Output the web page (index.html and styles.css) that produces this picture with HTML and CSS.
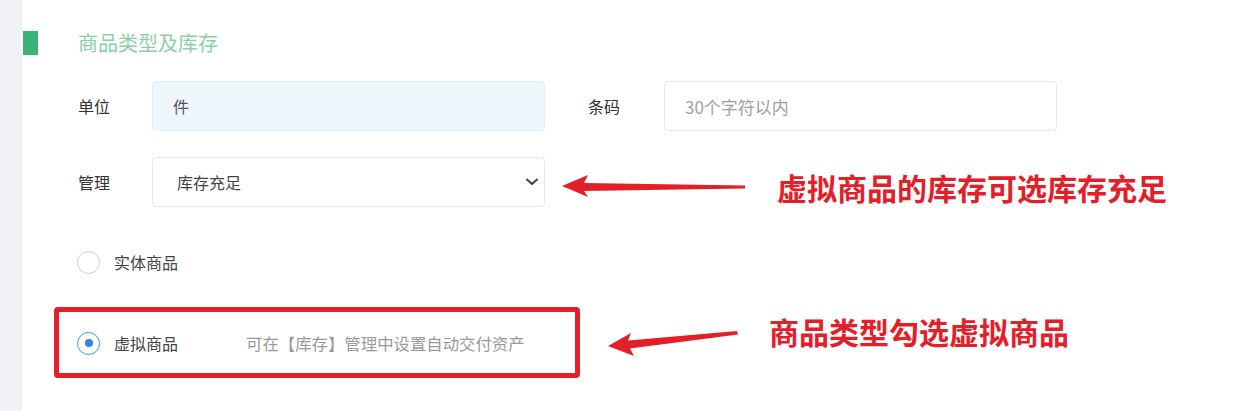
FILE: index.html
```html
<!DOCTYPE html>
<html lang="zh-CN">
<head>
<meta charset="utf-8">
<title>商品类型及库存</title>
<link rel="stylesheet" href="styles.css">
</head>
<body>
<div class="page">
  <div class="side"></div>
  <div class="main">
    <div class="sec-head">
      <span class="bar"></span>
      <span class="sec-title">商品类型及库存</span>
    </div>
    <div class="form">
      <div class="row">
        <span class="label">单位</span>
        <div class="field field-filled">件</div>
        <span class="label label-2">条码</span>
        <div class="field field-placeholder">30个字符以内</div>
      </div>
      <div class="row row-2">
        <span class="label">管理</span>
        <div class="field field-select">
          <span class="select-text">库存充足</span>
          <svg class="chevron" width="12" height="8" viewBox="0 0 12 8"><polyline points="1,1.5 6,6 11,1.5" fill="none" stroke="#444" stroke-width="2" stroke-linecap="round" stroke-linejoin="round"/></svg>
        </div>
      </div>
      <div class="radio-row radio-row-1">
        <span class="radio"></span>
        <span class="radio-label">实体商品</span>
      </div>
      <div class="radio-row radio-row-2">
        <span class="radio radio-on"><span class="dot"></span></span>
        <span class="radio-label">虚拟商品</span>
        <span class="hint">可在【库存】管理中设置自动交付资产</span>
      </div>
    </div>
  </div>

  <div class="red-box"></div>
  <svg class="arrows" width="1251" height="411" viewBox="0 0 1251 411">
    <polygon fill="#e3202a" points="562,186 588,175 584,183 745,185.5 745,188.5 584,191 588,197"/>
    <polygon fill="#e3202a" points="608,346 631,333 628,340.5 737,331 738,334.5 630,348.5 634,356"/>
  </svg>
  <div class="note note-1">虚拟商品的库存可选库存充足</div>
  <div class="note note-2">商品类型勾选虚拟商品</div>
</div>
</body>
</html>
```
FILE: styles.css
```css
* { box-sizing: border-box; }
html, body { margin: 0; padding: 0; background: #fff; }
body {
  font-family: "Noto Sans CJK SC", "Noto Sans", sans-serif;
  color: #333;
}
.page {
  position: relative;
  display: flex;
  width: 1251px;
  height: 411px;
  overflow: hidden;
}
.side {
  width: 22px;
  flex: none;
  background: #f0f2f5;
}
.main {
  flex: 1;
  background: #fff;
  padding-top: 31px;
}
.sec-head {
  display: flex;
  align-items: center;
  height: 24px;
}
.bar {
  width: 15px;
  height: 24px;
  margin-left: 1px;
  background: #3bb374;
}
.sec-title {
  margin-left: 40px;
  font-size: 20px;
  line-height: 22px;
  color: #8ccfa6;
}
.form {
  padding-left: 56px;
  margin-top: 26px;
}
.row {
  display: flex;
  align-items: center;
  height: 50px;
}
.row-2 { margin-top: 26px; }
.label {
  width: 74px;
  font-size: 16px;
  color: #333;
}
.label-2 {
  margin-left: 43px;
  width: 76px;
}
.field {
  display: flex;
  align-items: center;
  width: 393px;
  height: 50px;
  padding-left: 20px;
  border: 1px solid #e8e8e8;
  border-radius: 4px;
  font-size: 16px;
  background: #fff;
}
.field-filled {
  background: #eef6fe;
  border-color: #e6eef7;
  color: #555;
}
.field-placeholder {
  color: #a0a0a0;
  font-size: 17px;
}
.field-select {
  justify-content: space-between;
  padding-left: 24px;
  padding-right: 6px;
  color: #444;
}
.radio-row {
  display: flex;
  align-items: center;
  height: 24px;
}
.radio-row-1 { margin-top: 43px; }
.radio-row-2 { margin-top: 57px; }
.radio {
  width: 23px;
  height: 23px;
  margin-left: -1px;
  border: 1px solid #cfcfcf;
  border-radius: 50%;
  display: flex;
  align-items: center;
  justify-content: center;
  background: #fff;
}
.radio-on { border-color: #4a93d8; }
.dot {
  width: 8px;
  height: 8px;
  border-radius: 50%;
  background: #2b87e0;
}
.radio-label {
  margin-left: 14px;
  font-size: 16px;
  color: #444;
}
.hint {
  margin-left: 68px;
  font-size: 16.4px;
  color: #9a9a9a;
}
.red-box {
  position: absolute;
  left: 54px;
  top: 307px;
  width: 526px;
  height: 71px;
  border: 5px solid #e3202a;
  border-radius: 4px;
}
.arrows {
  position: absolute;
  left: 0;
  top: 0;
  pointer-events: none;
}
.note {
  position: absolute;
  font-size: 30px;
  line-height: 30px;
  font-weight: 700;
  color: #e3202a;
  white-space: nowrap;
}
.note-1 { left: 777px; top: 172px; }
.note-2 { left: 769px; top: 316px; }
```
